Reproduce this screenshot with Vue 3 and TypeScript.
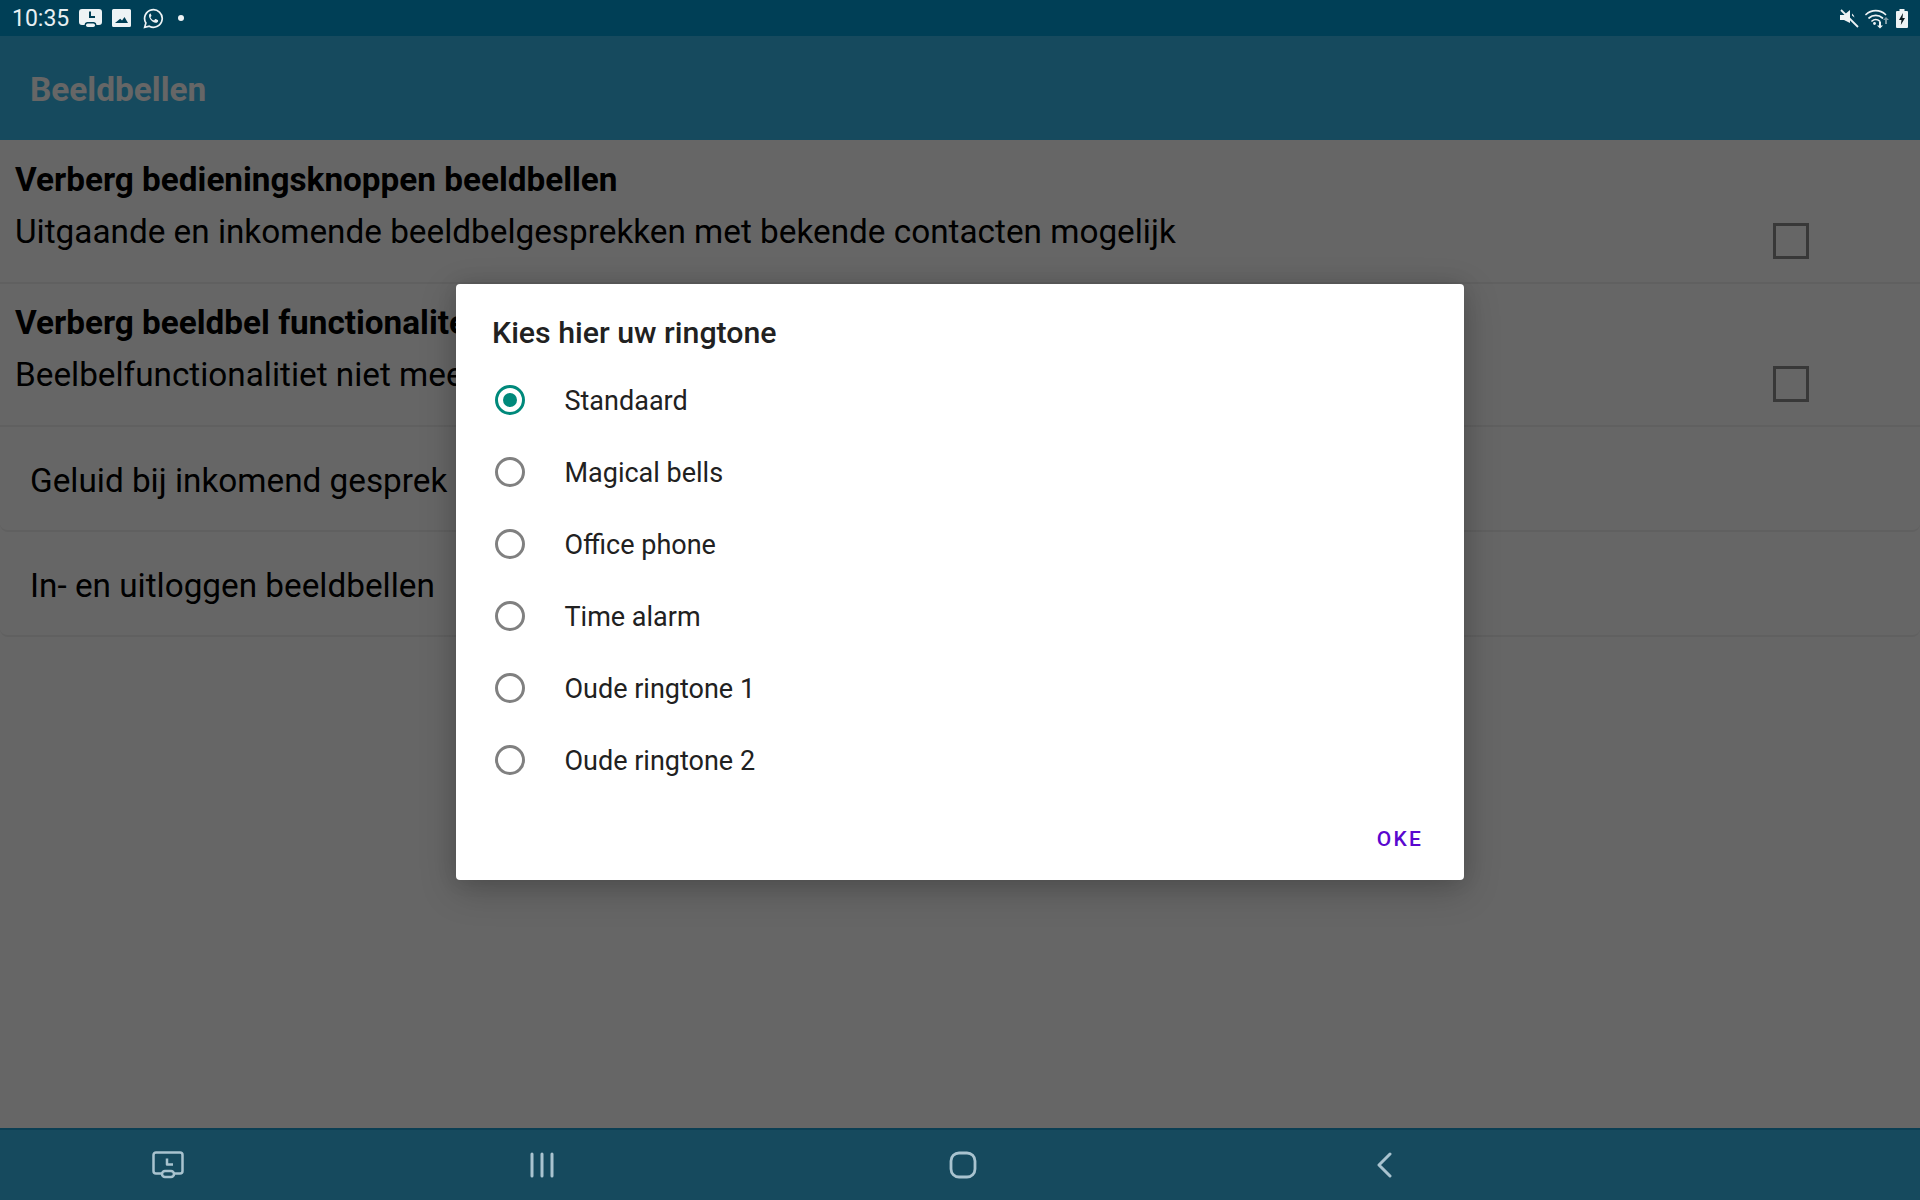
<script setup lang="ts">
interface Row { title: string; sub: string }
const checkRows: Row[] = [
  { title: 'Verberg bedieningsknoppen beeldbellen', sub: 'Uitgaande en inkomende beeldbelgesprekken met bekende contacten mogelijk' },
  { title: 'Verberg beeldbel functionaliteit', sub: 'Beelbelfunctionalitiet niet meer beschikbaar' },
]
const linkRows: string[] = ['Geluid bij inkomend gesprek', 'In- en uitloggen beeldbellen']
const tones: string[] = ['Standaard', 'Magical bells', 'Office phone', 'Time alarm', 'Oude ringtone 1', 'Oude ringtone 2']
const selected = 0
</script>

<template>
  <div class="screen">
    <header class="status">
      <span class="time">10:35</span>
      <svg class="si i1" width="23" height="18" viewBox="0 0 23 18">
        <path fill="#eef3f5" fill-rule="evenodd" d="M3 0h17a3 3 0 0 1 3 3v10a3 3 0 0 1-3 3h-2.500a3 3 0 0 0-2.500-3H8a3 3 0 0 0-2.500 3H3a3 3 0 0 1-3-3V3a3 3 0 0 1 3-3z M10 2.500v6.500h6V7h-4V2.500z"/>
        <rect x="7" y="14.500" width="9" height="3.500" rx="1.700" fill="#eef3f5"/>
      </svg>
      <svg class="si i2" width="19" height="18" viewBox="0 0 19 18">
        <path fill="#eef3f5" fill-rule="evenodd" d="M1.500 0h16A1.500 1.500 0 0 1 19 1.500v15a1.500 1.500 0 0 1-1.500 1.500h-16A1.500 1.500 0 0 1 0 16.500v-15A1.500 1.500 0 0 1 1.500 0z M3 14h13l-3.500-6-2.500 3.500-1.800-1.800z"/>
      </svg>
      <svg class="si i3" width="21" height="21" viewBox="0 0 21 21">
        <path fill="none" stroke="#eef3f5" stroke-width="1.700" d="M1.700 19.300l1.200-4.300a8.800 8.800 0 1 1 3.400 3.200z"/>
        <path fill="#eef3f5" d="M7.500 5.500c-.6 0-1.500.8-1.500 2.200 0 3 3.500 6.800 6.500 7 1.500.1 2.500-.9 2.600-1.800.1-.6-.1-.8-.4-1l-1.900-.9c-.4-.1-.6 0-.8.300l-.7.900c-.2.200-.4.200-.7.100-1.400-.6-2.400-1.600-3-2.900-.1-.3 0-.5.200-.6l.6-.8c.1-.2.100-.4 0-.6l-.8-1.900c-.1-.2-.3-.3-.5-.3z"/>
      </svg>
      <span class="dot"></span>
      <span class="grow"></span>
      <svg class="si m1" width="19" height="19" viewBox="0 0 19 19">
        <path fill="#eef3f5" d="M0 6h4l6-5v13L4 11H0z M12 4.500a6 6 0 0 1 2.500 4l-2.500-2z"/>
        <path stroke="#eef3f5" stroke-width="1.800" d="M1 1l17 17"/>
      </svg>
      <svg class="si m2" width="25" height="21" viewBox="0 0 25 21">
        <g fill="none" stroke="#eef3f5" stroke-width="1.700" stroke-linecap="round">
          <path d="M1 6.500a14 14 0 0 1 19.500 0"/>
          <path d="M4 10a10 10 0 0 1 13.500 0"/>
          <path d="M7 13a5.500 5.500 0 0 1 7.500 0"/>
        </g>
        <circle cx="9.500" cy="15.500" r="1.400" fill="#eef3f5"/>
        <path fill="#eef3f5" d="M14 13.500h2v4h2l-3 3-3-3h2z"/>
        <path fill="#7d9aa6" d="M21 9l3 3h-2v4h-2v-4h-2z"/>
      </svg>
      <svg class="si m3" width="12" height="19" viewBox="0 0 12 19">
        <path fill="#eef3f5" d="M3.500 0h5v2H11a1 1 0 0 1 1 1v15a1 1 0 0 1-1 1H1a1 1 0 0 1-1-1V3a1 1 0 0 1 1-1h2.500z"/>
        <path fill="#0b1a20" d="M7 4L3 11h2.500L4.800 16 9 9H6.500z"/>
      </svg>
    </header>

    <main class="main">
      <div class="appbar"><h1>Beeldbellen</h1></div>
      <section class="list">
        <div v-for="row in checkRows" :key="row.title" class="row check">
          <div class="texts">
            <div class="t">{{ row.title }}</div>
            <div class="s">{{ row.sub }}</div>
          </div>
          <span class="box"></span>
        </div>
        <div v-for="l in linkRows" :key="l" class="row link">{{ l }}</div>
      </section>

      <div class="scrim"></div>

      <div class="dialog">
        <h2>Kies hier uw ringtone</h2>
        <ul class="tones">
          <li v-for="(tone, i) in tones" :key="tone" class="tone">
            <span class="radio" :class="{ on: i === selected }"></span>
            <span>{{ tone }}</span>
          </li>
        </ul>
        <div class="actions"><span class="ok">OKE</span></div>
      </div>
    </main>

    <nav class="nav">
      <svg class="n1" width="32" height="28" viewBox="0 0 32 28">
        <g fill="none" stroke="#a9c3cf" stroke-width="2.500" stroke-linejoin="round">
          <path d="M11 22.500H4a2.500 2.500 0 0 1-2.500-2.500V4A2.500 2.500 0 0 1 4 1.500h24A2.500 2.500 0 0 1 30.500 4v16a2.500 2.500 0 0 1-2.500 2.500h-7"/>
          <path d="M15 7.500v6h6"/>
          <rect x="10" y="20" width="12" height="6" rx="3"/>
        </g>
      </svg>
      <svg class="n2" width="24" height="26" viewBox="0 0 24 26">
        <path stroke="#a9c3cf" stroke-width="3" stroke-linecap="round" d="M2 2v22M12 2v22M22 2v22"/>
      </svg>
      <svg class="n3" width="28" height="28" viewBox="0 0 28 28">
        <rect x="2" y="2" width="24" height="24" rx="8" fill="none" stroke="#a9c3cf" stroke-width="2.800"/>
      </svg>
      <svg class="n4" width="16" height="26" viewBox="0 0 16 26">
        <path d="M14 2L3 13l11 11" fill="none" stroke="#a9c3cf" stroke-width="3" stroke-linecap="round" stroke-linejoin="round"/>
      </svg>
    </nav>
  </div>
</template>

<style scoped>
.screen {
  width: 1920px;
  height: 1200px;
  display: flex;
  flex-direction: column;
  font-family: Roboto, "Noto Sans", sans-serif;
  overflow: hidden;
  background: #fff;
}
.status {
  height: 36px;
  background: #003f56;
  color: #e8eff2;
  display: flex;
  align-items: center;
  padding: 0 12px 0 12px;
  flex: none;
}
.time { font-size: 23px; width: 67px; }
.si { flex: none; display: block; }
.i2 { margin-left: 10px; }
.i3 { margin-left: 12px; }
.dot { width: 6px; height: 6px; border-radius: 50%; background: #eef3f5; margin-left: 14px; }
.grow { flex: 1; }
.m1 { margin-right: -1px; }
.m2 { margin-left: 7px; }
.m3 { margin-left: 6px; }
.main {
  position: relative;
  flex: 1;
  display: flex;
  flex-direction: column;
  background: #fff;
}
.appbar {
  height: 104px;
  background: #37b9eb;
  display: flex;
  align-items: center;
  padding: 4px 0 0 30px;
  box-sizing: border-box;
  flex: none;
}
.appbar h1 {
  margin: 0;
  color: #fff;
  font-size: 33.4px;
  font-weight: 700;
  line-height: 36px;
}
.list { display: flex; flex-direction: column; color: #000; padding-top: 1px; }
.row { border-bottom: 2px solid #f0f0f0; box-sizing: border-box; }
.check {
  height: 143px;
  display: flex;
  padding: 18px 111px 0 15px;
  justify-content: space-between;
}
.t { font-size: 33.3px; font-weight: 700; line-height: 42px; }
.s { font-size: 33.3px; line-height: 42px; margin-top: 10px; }
.box {
  width: 36px;
  height: 36px;
  box-sizing: border-box;
  border: 3px solid #8c8c8c;
  margin-top: 64px;
  flex: none;
}
.link {
  height: 105px;
  display: flex;
  align-items: center;
  padding: 4px 0 0 30px;
  font-size: 33.3px;
  border-radius: 8px;
}
.scrim {
  position: absolute;
  inset: 0;
  background: rgba(0, 0, 0, 0.6);
}
.dialog {
  position: absolute;
  left: 456px;
  top: 248px;
  width: 1008px;
  height: 596px;
  box-sizing: border-box;
  background: #fff;
  border-radius: 4px;
  box-shadow: 0 10px 36px rgba(0, 0, 0, 0.22), 0 0 20px rgba(0, 0, 0, 0.1);
  display: flex;
  flex-direction: column;
  color: #212121;
}
h2 {
  margin: 0;
  padding: 30px 36px 0;
  font-size: 30.300px;
  font-weight: 500;
  line-height: 38px;
}
.tones {
  list-style: none;
  margin: 0;
  padding: 0;
  margin-top: 13px;
}
.tone {
  height: 72px;
  display: flex;
  align-items: center;
  padding-left: 39px;
  font-size: 27px;
}
.radio {
  width: 30px;
  height: 30px;
  box-sizing: border-box;
  border: 3px solid #808080;
  border-radius: 50%;
  margin: 0 39.500px 2px 0;
  flex: none;
  display: flex;
  align-items: center;
  justify-content: center;
}
.radio.on { border-color: #00897b; }
.radio.on::after {
  content: "";
  width: 14px;
  height: 14px;
  border-radius: 50%;
  background: #00897b;
}
.actions {
  margin-top: auto;
  padding: 0 41px 29px 0;
  display: flex;
  justify-content: flex-end;
}
.ok {
  color: #5a07cf;
  font-size: 21px;
  font-weight: 500;
  letter-spacing: 2.200px;
  line-height: 24px;
}
.nav {
  height: 72px;
  flex: none;
  box-sizing: border-box;
  background: #164a5e;
  border-top: 2px solid #0b3f54;
  display: flex;
  align-items: center;
  padding-left: 152px;
}
.n2 { margin-left: 346px; }
.n3 { margin-left: 395px; }
.n4 { margin-left: 399px; }
</style>

<style>
html, body { margin: 0; padding: 0; background: #fff; }
</style>
